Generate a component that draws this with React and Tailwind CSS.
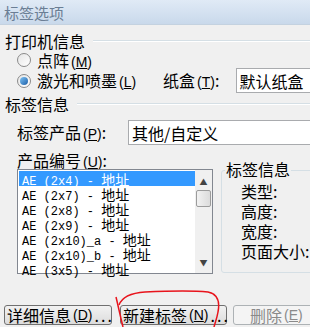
const cjk = { fontFamily: '"Noto Sans CJK SC", "Liberation Sans", sans-serif' };

const Radio = ({ checked }) => (
  <span className="w-[14px] h-[14px] rounded-full border border-[#8a8a8a] bg-gradient-to-br from-[#e6e6e6] to-[#ffffff] flex items-center justify-center shrink-0">
    {checked ? (
      <span className="w-[8px] h-[8px] rounded-full bg-gradient-to-br from-[#7ec4f5] to-[#1b5fa8]" />
    ) : null}
  </span>
);

const Key = ({ k }) => (
  <span className="text-[14px] ml-[2px]" style={{ fontFamily: '"Liberation Sans", sans-serif' }}>
    (<span className="underline">{k}</span>)
  </span>
);

const Header = ({ text, className }) => (
  <div className={`flex items-center h-[18px] pl-[5px] ${className}`}>
    <span className="text-[16px] leading-none text-black">{text}</span>
    <div className="flex-1 ml-[8px] border-t border-[#d5dfe5] border-b-white border-b" />
  </div>
);

const items = [
  ["(2x4)", ""],
  ["(2x7)", ""],
  ["(2x8)", ""],
  ["(2x9)", ""],
  ["(2x10)", "_a"],
  ["(2x10)", "_b"],
  ["(3x5)", ""],
];

export default function App() {
  return (
    <div className="w-[310px] h-[327px] overflow-hidden bg-[#f0f0f0] relative" style={cjk}>
      <div className="h-[25px] flex items-center px-[4px] bg-gradient-to-b from-[#e0eaf6] to-[#c9d9eb] border-b border-[#c4d2e0]">
        <span className="text-[15px] text-[#6b7e94] leading-none">标签选项</span>
      </div>

      <Header text="打印机信息" className="mt-[7px]" />

      <div className="flex items-center h-[16px] mt-[2px] pl-[17px] gap-[6px]">
        <Radio />
        <span className="text-[16px] leading-none">点阵<Key k="M" /></span>
      </div>

      <div className="flex items-center h-[25px] pl-[17px]">
        <div className="flex items-center gap-[6px] w-[146px] shrink-0">
          <Radio checked />
          <span className="text-[16px] leading-none whitespace-nowrap">激光和喷墨<Key k="L" /></span>
        </div>
        <span className="text-[16px] leading-none whitespace-nowrap shrink-0">纸盒<Key k="T" />:</span>
        <div className="ml-[17px] w-[120px] h-[25px] shrink-0 bg-white border border-[#a9abae] flex items-center pl-[2px]">
          <span className="text-[16px] leading-none whitespace-nowrap">默认纸盒</span>
          <span className="ml-[10px] w-[2px] h-[4px] bg-[#9a9a9a]" />
        </div>
      </div>

      <Header text="标签信息" className="mt-[2px]" />

      <div className="flex items-center h-[25px] mt-[7px] pl-[17px]">
        <span className="text-[16px] leading-none w-[111px] shrink-0 whitespace-nowrap">标签产品<Key k="P" />:</span>
        <div className="w-[200px] h-[25px] shrink-0 bg-white border border-[#a9abae] flex items-center pl-[3px]">
          <span className="text-[16px] leading-none whitespace-nowrap">其他/自定义</span>
        </div>
      </div>

      <div className="flex items-center h-[18px] mt-[6px] pl-[17px]">
        <span className="text-[16px] leading-none whitespace-nowrap">产品编号<Key k="U" />:</span>
      </div>

      <div className="flex pl-[17px] items-start">
        <div className="w-[196px] h-[105px] bg-white border border-[#828790] flex shrink-0">
          <div className="flex-1 pt-[1px] pl-[1px]">
            {items.map(([size, suf], i) => (
              <div
                key={i}
                className={`h-[15px] leading-[15px] pl-[3px] whitespace-nowrap ${
                  i === 0 ? "bg-[#3399ff] text-white" : "text-black"
                }`}
              >
                <span className="text-[12px]" style={{ fontFamily: '"Liberation Mono", monospace' }}>
                  {`AE ${size}${suf} - `}
                </span>
                <span className="text-[14px]">地址</span>
              </div>
            ))}
          </div>
          <div className="w-[17px] bg-[#f0f0f0] flex flex-col items-center">
            <span className="text-[8px] text-[#444] mt-[8px] leading-none">▲</span>
            <div className="w-[15px] h-[17px] mt-[4px] rounded-[2px] border border-[#9c9c9c] bg-gradient-to-r from-[#f2f2f2] to-[#dcdcdc]" />
            <div className="flex-1" />
            <span className="text-[8px] text-[#444] mb-[6px] leading-none">▼</span>
          </div>
        </div>

        <div className="relative ml-[8px] mt-[1px] w-[120px] h-[103px] shrink-0 border border-[#d5dfe5] rounded-[3px]">
          <span className="absolute -top-[11px] left-[3px] px-[1px] bg-[#f0f0f0] text-[16px] leading-[18px]">标签信息</span>
          <div className="flex flex-col pl-[19px] pt-[10px]">
            {["类型:", "高度:", "宽度:", "页面大小:"].map((t) => (
              <div key={t} className="h-[20px] flex items-center text-[16px] leading-none">{t}</div>
            ))}
          </div>
        </div>
      </div>

      <div className="flex items-center mt-[31px] pl-[4px]">
        <button className="w-[108px] h-[20px] shrink-0 rounded-[3px] border border-[#707070] bg-gradient-to-b from-[#f2f2f2] to-[#dcdcdc] flex items-center pl-[2px] text-[16px] leading-none whitespace-nowrap">
          详细信息<Key k="D" /><span className="tracking-[2px] ml-[2px]">...</span>
        </button>
        <button className="ml-[8px] w-[107px] h-[20px] shrink-0 rounded-[3px] border border-[#707070] bg-gradient-to-b from-[#f2f2f2] to-[#dcdcdc] flex items-center pl-[2px] text-[16px] leading-none whitespace-nowrap">
          新建标签<Key k="N" /><span className="tracking-[2px] ml-[2px]">...</span>
        </button>
        <button className="ml-[6px] w-[100px] h-[20px] shrink-0 rounded-[3px] border border-[#adb2b5] bg-[#f4f4f4] flex items-center pl-[16px] text-[16px] leading-none text-[#8a8a8a] whitespace-nowrap">
          删除<Key k="E" />
        </button>
      </div>

      <svg className="absolute inset-0 pointer-events-none" width="310" height="327" viewBox="0 0 310 327">
        <path d="M116 297 C118 305 120 315 123 327" fill="none" stroke="#e8141c" strokeWidth="1.5" />
        <path
          d="M119 305 C122 297 130 293 145 292 C165 291 190 290 208 292 C218 294 220 302 218 312 C217 318 215 323 214 327"
          fill="none"
          stroke="#e8141c"
          strokeWidth="1.5"
        />
      </svg>
    </div>
  );
}
